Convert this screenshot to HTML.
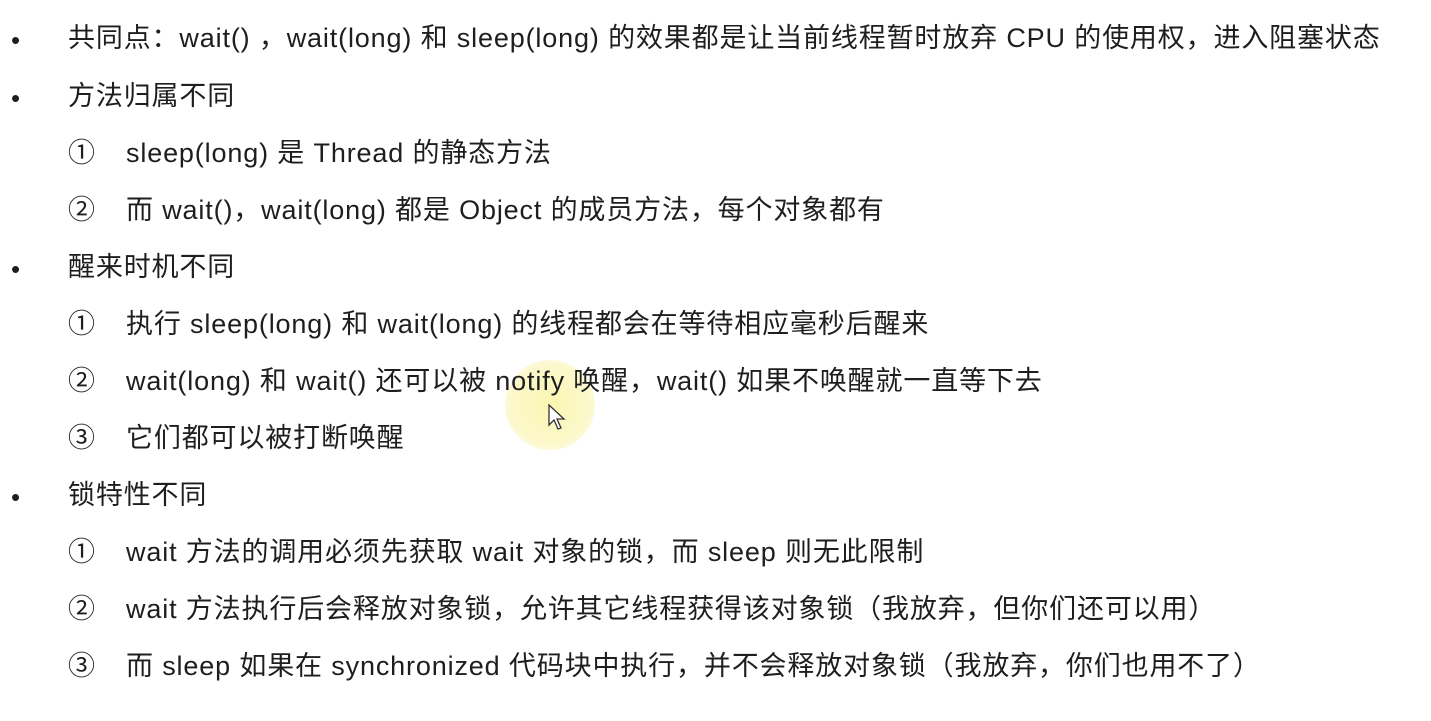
<!DOCTYPE html>
<html><head><meta charset="utf-8"><style>
body{margin:0;width:1431px;height:721px;background:#fff;overflow:hidden;position:relative;font-family:"Liberation Sans","Noto Sans CJK SC",sans-serif;color:#1e1e1e;font-size:27px;letter-spacing:0.85px}
.l{position:absolute;white-space:nowrap;line-height:30px}
.b{left:11px;font-size:26px}
.hl{position:absolute;left:505px;top:360px;width:90px;height:90px;border-radius:50%;background:radial-gradient(circle,rgba(250,245,170,.9) 0%,rgba(250,245,180,.7) 60%,rgba(255,255,220,0) 100%)}
</style></head><body>
<div class="hl"></div>
<div class="l b" style="top:25px">•</div><div class="l" style="left:68px;top:23px">共同点：wait() ，wait(long) 和 sleep(long) 的效果都是让当前线程暂时放弃 CPU 的使用权，进入阻塞状态</div>
<div class="l b" style="top:83px">•</div><div class="l" style="left:68px;top:81px">方法归属不同</div>
<div class="l" style="left:68px;top:138px">①</div><div class="l" style="left:126px;top:138px">sleep(long) 是 Thread 的静态方法</div>
<div class="l" style="left:68px;top:195px">②</div><div class="l" style="left:126px;top:195px">而 wait()，wait(long) 都是 Object 的成员方法，每个对象都有</div>
<div class="l b" style="top:254px">•</div><div class="l" style="left:68px;top:252px">醒来时机不同</div>
<div class="l" style="left:68px;top:309px">①</div><div class="l" style="left:126px;top:309px">执行 sleep(long) 和 wait(long) 的线程都会在等待相应毫秒后醒来</div>
<div class="l" style="left:68px;top:366px">②</div><div class="l" style="left:126px;top:366px">wait(long) 和 wait() 还可以被 notify 唤醒，wait() 如果不唤醒就一直等下去</div>
<div class="l" style="left:68px;top:423px">③</div><div class="l" style="left:126px;top:423px">它们都可以被打断唤醒</div>
<div class="l b" style="top:482px">•</div><div class="l" style="left:68px;top:480px">锁特性不同</div>
<div class="l" style="left:68px;top:537px">①</div><div class="l" style="left:126px;top:537px">wait 方法的调用必须先获取 wait 对象的锁，而 sleep 则无此限制</div>
<div class="l" style="left:68px;top:594px">②</div><div class="l" style="left:126px;top:594px">wait 方法执行后会释放对象锁，允许其它线程获得该对象锁（我放弃，但你们还可以用）</div>
<div class="l" style="left:68px;top:651px">③</div><div class="l" style="left:126px;top:651px">而 sleep 如果在 synchronized 代码块中执行，并不会释放对象锁（我放弃，你们也用不了）</div>
<svg style="position:absolute;left:547px;top:403px" width="22" height="30" viewBox="0 0 22 30"><path d="M2 2 L2 22 L7 17 L11 26 L14 25 L10 16 L17 16 Z" fill="#fff" stroke="#333" stroke-width="1.3"/></svg>
</body></html>
